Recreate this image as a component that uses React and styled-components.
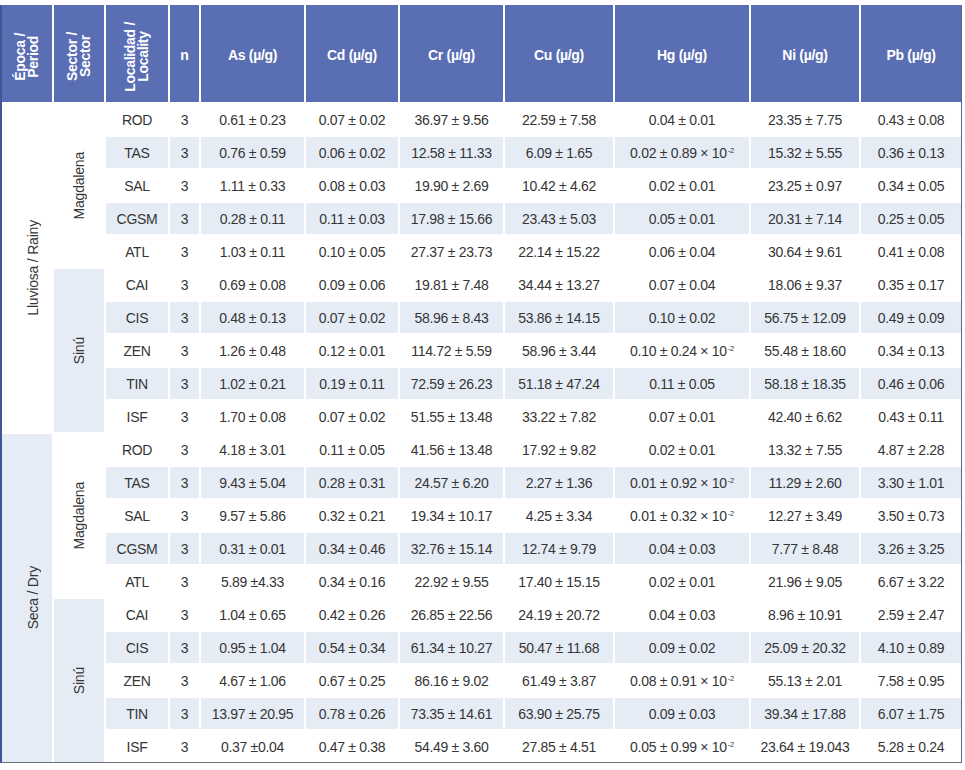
import React from "react";
import styled, { createGlobalStyle } from "styled-components";

const GlobalStyle = createGlobalStyle`
  html, body {
    margin: 0;
    padding: 0;
    background: #ffffff;
  }
  body {
    font-family: "Liberation Sans", Arial, sans-serif;
  }
`;

const headers = ["As", "Cd", "Cr", "Cu", "Hg", "Ni", "Pb"];

const periods = [
  {
    label: "Lluviosa / Rainy",
    sectors: [
      {
        name: "Magdalena",
        rows: [
          ["ROD", "0.61 ± 0.23", "0.07 ± 0.02", "36.97 ± 9.56", "22.59 ± 7.58", "0.04 ± 0.01", "23.35 ± 7.75", "0.43 ± 0.08"],
          ["TAS", "0.76 ± 0.59", "0.06 ± 0.02", "12.58 ± 11.33", "6.09 ± 1.65", "0.02 ± 0.89 × 10^", "15.32 ± 5.55", "0.36 ± 0.13"],
          ["SAL", "1.11 ± 0.33", "0.08 ± 0.03", "19.90 ± 2.69", "10.42 ± 4.62", "0.02 ± 0.01", "23.25 ± 0.97", "0.34 ± 0.05"],
          ["CGSM", "0.28 ± 0.11", "0.11 ± 0.03", "17.98 ± 15.66", "23.43 ± 5.03", "0.05 ± 0.01", "20.31 ± 7.14", "0.25 ± 0.05"],
          ["ATL", "1.03 ± 0.11", "0.10 ± 0.05", "27.37 ± 23.73", "22.14 ± 15.22", "0.06 ± 0.04", "30.64 ± 9.61", "0.41 ± 0.08"],
        ],
      },
      {
        name: "Sinú",
        rows: [
          ["CAI", "0.69 ± 0.08", "0.09 ± 0.06", "19.81 ± 7.48", "34.44 ± 13.27", "0.07 ± 0.04", "18.06 ± 9.37", "0.35 ± 0.17"],
          ["CIS", "0.48 ± 0.13", "0.07 ± 0.02", "58.96 ± 8.43", "53.86 ± 14.15", "0.10 ± 0.02", "56.75 ± 12.09", "0.49 ± 0.09"],
          ["ZEN", "1.26 ± 0.48", "0.12 ± 0.01", "114.72 ± 5.59", "58.96 ± 3.44", "0.10 ± 0.24 × 10^", "55.48 ± 18.60", "0.34 ± 0.13"],
          ["TIN", "1.02 ± 0.21", "0.19 ± 0.11", "72.59 ± 26.23", "51.18 ± 47.24", "0.11 ± 0.05", "58.18 ± 18.35", "0.46 ± 0.06"],
          ["ISF", "1.70 ± 0.08", "0.07 ± 0.02", "51.55 ± 13.48", "33.22 ± 7.82", "0.07 ± 0.01", "42.40 ± 6.62", "0.43 ± 0.11"],
        ],
      },
    ],
  },
  {
    label: "Seca / Dry",
    sectors: [
      {
        name: "Magdalena",
        rows: [
          ["ROD", "4.18 ± 3.01", "0.11 ± 0.05", "41.56 ± 13.48", "17.92 ± 9.82", "0.02 ± 0.01", "13.32 ± 7.55", "4.87 ± 2.28"],
          ["TAS", "9.43 ± 5.04", "0.28 ± 0.31", "24.57 ± 6.20", "2.27 ± 1.36", "0.01 ± 0.92 × 10^", "11.29 ± 2.60", "3.30 ± 1.01"],
          ["SAL", "9.57 ± 5.86", "0.32 ± 0.21", "19.34 ± 10.17", "4.25 ± 3.34", "0.01 ± 0.32 × 10^", "12.27 ± 3.49", "3.50 ± 0.73"],
          ["CGSM", "0.31 ± 0.01", "0.34 ± 0.46", "32.76 ± 15.14", "12.74 ± 9.79", "0.04 ± 0.03", "7.77 ± 8.48", "3.26 ± 3.25"],
          ["ATL", "5.89 ±4.33", "0.34 ± 0.16", "22.92 ± 9.55", "17.40 ± 15.15", "0.02 ± 0.01", "21.96 ± 9.05", "6.67 ± 3.22"],
        ],
      },
      {
        name: "Sinú",
        rows: [
          ["CAI", "1.04 ± 0.65", "0.42 ± 0.26", "26.85 ± 22.56", "24.19 ± 20.72", "0.04 ± 0.03", "8.96 ± 10.91", "2.59 ± 2.47"],
          ["CIS", "0.95 ± 1.04", "0.54 ± 0.34", "61.34 ± 10.27", "50.47 ± 11.68", "0.09 ± 0.02", "25.09 ± 20.32", "4.10 ± 0.89"],
          ["ZEN", "4.67 ± 1.06", "0.67 ± 0.25", "86.16 ± 9.02", "61.49 ± 3.87", "0.08 ± 0.91 × 10^", "55.13 ± 2.01", "7.58 ± 0.95"],
          ["TIN", "13.97 ± 20.95", "0.78 ± 0.26", "73.35 ± 14.61", "63.90 ± 25.75", "0.09 ± 0.03", "39.34 ± 17.88", "6.07 ± 1.75"],
          ["ISF", "0.37 ±0.04", "0.47 ± 0.38", "54.49 ± 3.60", "27.85 ± 4.51", "0.05 ± 0.99 × 10^", "23.64 ± 19.043", "5.28 ± 0.24"],
        ],
      },
    ],
  },
];

// values ending in "^" carry the × 10⁻² exponent
function Value({ text }) {
  if (text.endsWith("^")) {
    return (
      <>
        {text.slice(0, -1)}
        <Sup>-2</Sup>
      </>
    );
  }
  return text;
}

function App() {
  return (
    <>
      <GlobalStyle />
      <Page>
        <Table>
          <HeadCell $rotated>
            <Turned>Época /<br />Period</Turned>
          </HeadCell>
          <HeadCell $rotated>
            <Turned>Sector /<br />Sector</Turned>
          </HeadCell>
          <HeadCell $rotated>
            <Turned>Localidad /<br />Locality</Turned>
          </HeadCell>
          <HeadCell>n</HeadCell>
          {headers.map((h) => (
            <HeadCell key={h}>{h} (µ/g)</HeadCell>
          ))}

          {periods.map((period, p) =>
            period.sectors.map((sector, s) =>
              sector.rows.map((row, r) => {
                const shade = r % 2 === 1;
                return (
                  <React.Fragment key={`${p}-${s}-${r}`}>
                    {s === 0 && r === 0 && (
                      <GroupCell $span={10} $shade={p === 1} $period>
                        <Turned $light>{period.label}</Turned>
                      </GroupCell>
                    )}
                    {r === 0 && (
                      <GroupCell $span={5} $shade={s === 1}>
                        <Turned $light>{sector.name}</Turned>
                      </GroupCell>
                    )}
                    <Cell $shade={shade}>{row[0]}</Cell>
                    <Cell $shade={shade}>3</Cell>
                    {row.slice(1).map((v, i) => (
                      <Cell key={i} $shade={shade}>
                        <Value text={v} />
                      </Cell>
                    ))}
                  </React.Fragment>
                );
              })
            )
          )}
        </Table>
      </Page>
    </>
  );
}

const Page = styled.div`
  width: 965px;
  height: 770px;
  padding-top: 5px;
  box-sizing: border-box;
  background: #ffffff;
`;

const Table = styled.div`
  display: grid;
  grid-template-columns: 50px 50px 62px 29px 103px 92px 103px 108px 134px 108px 100px;
  grid-template-rows: 97px repeat(20, 31px);
  gap: 2px;
  width: max-content;
  background: #ffffff;
  border-left: 2px solid #3e5596;
  border-right: 1px solid #5a6790;
  border-bottom: 1px solid #6b6f78;
  font-family: "Liberation Sans", Arial, sans-serif;
`;

const HeadCell = styled.div`
  display: flex;
  align-items: center;
  justify-content: center;
  padding-top: ${(p) => (p.$rotated ? "6px" : "4px")};
  background: #5a6eb4;
  color: #ffffff;
  font-size: 14px;
  font-weight: bold;
  letter-spacing: -0.3px;
  line-height: 13px;
  text-align: center;
  box-sizing: border-box;
`;

const Turned = styled.span`
  writing-mode: vertical-rl;
  transform: rotate(180deg);
  text-align: center;
  line-height: ${(p) => (p.$light ? "16px" : "13px")};
  font-weight: ${(p) => (p.$light ? "normal" : "bold")};
`;

const GroupCell = styled.div`
  grid-row: span ${(p) => p.$span};
  display: flex;
  align-items: center;
  justify-content: center;
  padding-left: ${(p) => (p.$period ? "12px" : "0")};
  background: ${(p) => (p.$shade ? "#e6ecf6" : "#ffffff")};
  color: #353535;
  font-size: 14px;
  letter-spacing: -0.2px;
  box-sizing: border-box;
`;

const Cell = styled.div`
  display: flex;
  align-items: center;
  justify-content: center;
  background: ${(p) => (p.$shade ? "#e6ecf6" : "#ffffff")};
  color: #353535;
  font-size: 14px;
  letter-spacing: -0.3px;
  white-space: nowrap;
`;

const Sup = styled.sup`
  font-size: 7.5px;
  line-height: 0;
  position: relative;
  top: -2px;
  margin-left: 1px;
`;

export default App;
